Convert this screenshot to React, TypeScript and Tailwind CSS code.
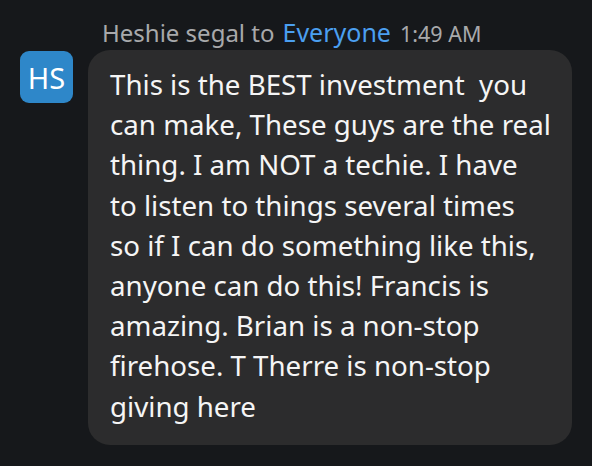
const LINES = [
  'This is the BEST investment  you',
  'can make, These guys are the real',
  'thing. I am NOT a techie. I have',
  'to listen to things several times',
  'so if I can do something like this,',
  'anyone can do this! Francis is',
  'amazing. Brian is a non-stop',
  'firehose. T Therre is non-stop',
  'giving here',
]

export default function App() {
  return (
    <div className="w-[592px] h-[466px] bg-[#16181b] font-['Noto_Sans',sans-serif] overflow-hidden">
      <div className="flex pl-[20px] pt-[16px]">
        {/* avatar */}
        <div className="mt-[35px] w-[53px] h-[52px] shrink-0 rounded-[9px] bg-[#2e87c9] flex items-center justify-center text-white text-[29px] leading-none">
          HS
        </div>

        <div className="ml-[15px] flex flex-col">
          {/* header */}
          <div className="pl-[14px] h-[34px] flex items-baseline whitespace-nowrap leading-[32px]">
            <span className="text-[24px] text-[#a8a9ab]">Heshie segal to</span>
            <span className="ml-[8px] text-[25px] text-[#4b9ff0]">Everyone</span>
            <span className="ml-[9px] text-[21.5px] text-[#a8a9ab]">1:49 AM</span>
          </div>

          {/* message bubble */}
          <div className="w-[484px] rounded-[22px] bg-[#2c2c2d] pl-[22px] pt-[14px] pb-[19px] text-[27.7px] leading-[40.2px] text-[#f5f5f5]">
            {LINES.map((l) => (
              <div key={l} className="whitespace-pre">
                {l}
              </div>
            ))}
          </div>
        </div>
      </div>
    </div>
  )
}
